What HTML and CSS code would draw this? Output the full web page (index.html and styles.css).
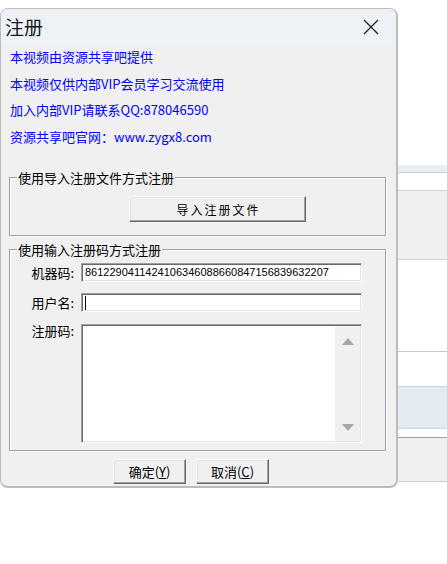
FILE: index.html
```html
<!DOCTYPE html>
<html lang="zh-CN">
<head>
    <meta charset="UTF-8">
    <meta name="viewport" content="width=device-width, initial-scale=1.0">
    <title>注册</title>
    <link rel="stylesheet" href="styles.css">
</head>
<body>
    <div class="dialog">
        <div class="titlebar">
            <span class="title">注册</span>
            <svg class="close" width="16" height="16" viewBox="0 0 16 16">
                <path d="M1 1L15 15M15 1L1 15" stroke="#1f1f1f" stroke-width="1.3" fill="none"/>
            </svg>
        </div>

        <div class="info">
            <p>本视频由资源共享吧提供</p>
            <p>本视频仅供内部VIP会员学习交流使用</p>
            <p>加入内部VIP请联系QQ:878046590</p>
            <p>资源共享吧官网：www.zygx8.com</p>
        </div>

        <div class="group group-file">
            <div class="group-title">使用导入注册文件方式注册</div>
            <button class="btn btn-import">导入注册文件</button>
        </div>

        <div class="group group-code">
            <div class="group-title">使用输入注册码方式注册</div>
            <div class="form">
                <label class="label">机器码:</label>
                <div class="field">8612290411424106346088660847156839632207</div>
                <label class="label">用户名:</label>
                <div class="field"><span class="caret"></span></div>
                <label class="label label-top">注册码:</label>
                <div class="field memo">
                    <div class="memo-text"></div>
                    <div class="scroll">
                        <svg width="12" height="7" viewBox="0 0 12 7"><path d="M6 0L12 7H0Z" fill="#a6a6a6"/></svg>
                        <svg width="12" height="7" viewBox="0 0 12 7"><path d="M0 0H12L6 7Z" fill="#a6a6a6"/></svg>
                    </div>
                </div>
            </div>
        </div>

        <div class="actions">
            <button class="btn btn-small">确定(<u>Y</u>)</button>
            <button class="btn btn-small">取消(<u>C</u>)</button>
        </div>
    </div>

    <!-- window behind the dialog -->
    <div class="backdrop">
        <div class="stripe s-top"></div>
        <div class="stripe s-head"></div>
        <div class="stripe s-row1"></div>
        <div class="stripe s-grey1"></div>
        <div class="stripe s-row2"></div>
        <div class="stripe s-row3"></div>
        <div class="stripe s-sel"></div>
        <div class="stripe s-row4"></div>
        <div class="stripe s-grey2"></div>
    </div>
</body>
</html>
```

FILE: styles.css
```css
body {
    margin: 0;
    width: 447px;
    height: 564px;
    display: flex;
    align-items: flex-start;
    background: #ffffff;
    font-family: "Noto Sans CJK SC", "Liberation Sans", sans-serif;
    overflow: hidden;
}

.dialog {
    box-sizing: border-box;
    flex: 0 0 398px;
    height: 480px;
    margin-top: 8px;
    border: 1px solid #bcbcbc;
    border-right-width: 2px;
    border-bottom-width: 2px;
    border-radius: 8px;
    background: #f0f0f0;
    overflow: hidden;
}

.titlebar {
    height: 35px;
    display: flex;
    align-items: center;
    justify-content: space-between;
    padding: 0 17px 0 4px;
    background: #eef2f7;
}

.title {
    font-size: 19px;
    line-height: 24px;
    color: #1a1a1a;
}

.info {
    padding-left: 9px;
}

.info p {
    margin: 0;
    font-size: 13px;
    line-height: 26.5px;
    color: #0000ff;
}

.group {
    box-sizing: border-box;
    width: 377px;
    margin-left: 8px;
    border: 1px solid #a0a0a0;
    box-shadow: inset 1px 1px 0 #ffffff, 1px 1px 0 #ffffff;
}

.group-file {
    margin-top: 27px;
    height: 59px;
}

.group-code {
    margin-top: 13px;
    height: 202px;
}

.group-title {
    width: fit-content;
    margin: -8px 0 0 7px;
    padding: 0 1px;
    background: #f0f0f0;
    font-size: 13px;
    line-height: 16px;
    color: #000;
}

.btn {
    box-sizing: border-box;
    background: #f0f0f0;
    border: 1px solid;
    border-color: #ffffff #696969 #696969 #ffffff;
    box-shadow: inset -1px -1px 0 #a0a0a0, inset 1px 1px 0 #e3e3e3;
    font-family: "Noto Sans CJK SC", sans-serif;
    font-size: 13px;
    color: #000;
    padding: 0;
}

.btn-import {
    display: block;
    width: 177px;
    height: 26px;
    margin: 10px 0 0 119px;
    font-size: 12px;
    letter-spacing: 2px;
    padding-left: 2px;
}

.form {
    display: grid;
    grid-template-columns: 64px 281px;
    grid-template-rows: 19px 19px 120px;
    column-gap: 7px;
    row-gap: 11px;
    margin-top: 5px;
}

.label {
    text-align: right;
    font-size: 13px;
    line-height: 19px;
    color: #000;
}

.label-top {
    line-height: 14px;
    margin-top: 1px;
}

.field {
    box-sizing: border-box;
    background: #ffffff;
    border: 1px solid;
    border-color: #a0a0a0 #ffffff #ffffff #a0a0a0;
    box-shadow: inset 1px 1px 0 #696969, inset -1px -1px 0 #e3e3e3;
    padding: 1px 0 0 3px;
    font-family: "Liberation Sans", sans-serif;
    font-size: 11px;
    line-height: 15px;
    color: #000;
    white-space: nowrap;
    overflow: hidden;
}

.caret {
    display: inline-block;
    width: 1px;
    height: 14px;
    margin-top: 1px;
    background: #000;
    vertical-align: top;
}

.memo {
    display: flex;
    margin-top: 1px;
    padding: 1px 1px 1px 2px;
}

.memo-text {
    flex: 1;
}

.scroll {
    width: 25px;
    display: flex;
    flex-direction: column;
    align-items: center;
    justify-content: space-between;
    padding: 12px 0 10px;
    background: #f0f0f0;
}

.scroll svg {
    display: block;
}

.actions {
    display: flex;
    gap: 10px;
    margin-top: 8px;
    padding-left: 112px;
}

.btn-small {
    width: 73px;
    height: 25px;
    line-height: 20px;
}

.btn-small u {
    text-underline-offset: 1px;
}

.backdrop {
    flex: 1;
    display: flex;
    flex-direction: column;
}

.stripe {
    border-bottom: 1px solid #c5d5e4;
}

.s-top { height: 165px; border: none; }
.s-head { height: 7px; background: #e8eef4; border-color: #cccccc; }
.s-row1 { height: 17px; background: #ffffff; }
.s-grey1 { height: 68px; background: #f0f0f0; }
.s-row2 { height: 91px; background: #ffffff; border-color: #c8c8c8; }
.s-row3 { height: 34px; background: #ffffff; }
.s-sel { height: 41px; background: #e3ebf3; }
.s-row4 { height: 8px; background: #ffffff; border-color: #a0a0a0; }
.s-grey2 { height: 43px; background: #f0f0f0; border-color: #d0d0d0; }
```
